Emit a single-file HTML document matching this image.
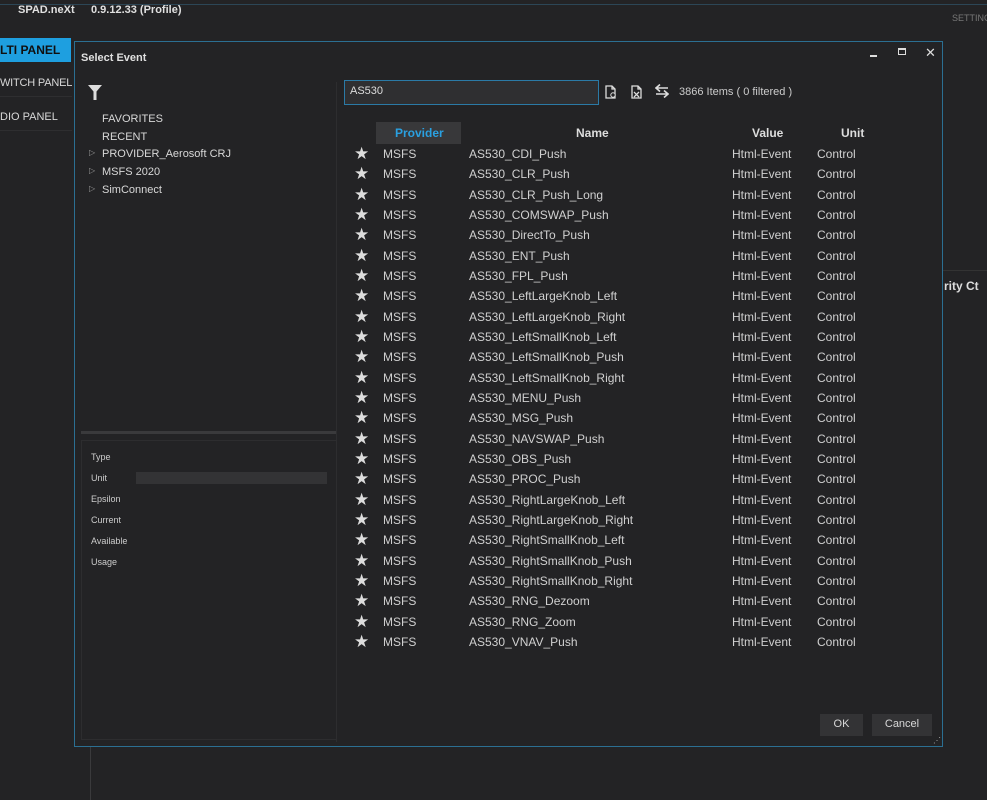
<!DOCTYPE html>
<html><head><meta charset="utf-8"><style>
*{margin:0;padding:0;box-sizing:border-box}
body{width:987px;height:800px;background:#232325;font-family:"Liberation Sans",sans-serif;color:#d8d8d8;position:relative;overflow:hidden;font-size:12px}
.a{position:absolute;white-space:nowrap}
.row{position:absolute;left:0;height:20px;font-size:12px;color:#d0d0d0}
.row span{position:absolute;top:0}
</style></head><body>
<div class="a" style="left:0;top:4px;width:987px;height:1px;background:#2c4656"></div>
<div class="a" style="left:18px;top:4px;font-size:11px;font-weight:bold;color:#e0e0e0">SPAD.neXt</div>
<div class="a" style="left:91px;top:4px;font-size:11px;font-weight:bold;color:#e0e0e0">0.9.12.33 (Profile)</div>
<div class="a" style="left:952px;top:13px;font-size:9px;color:#777">SETTING</div>
<div class="a" style="left:0;top:38px;width:71px;height:24px;background:#1e9fe0;color:#101010;font-size:12px;font-weight:bold;padding:5px 0 0 0">LTI PANEL</div>
<div class="a" style="left:0;top:77px;font-size:11px;color:#d8d8d8;letter-spacing:-0.2px">WITCH PANEL</div>
<div class="a" style="left:0;top:96px;width:72px;height:1px;background:#2e2e30"></div>
<div class="a" style="left:0;top:111px;font-size:11px;color:#d8d8d8">DIO PANEL</div>
<div class="a" style="left:0;top:130px;width:72px;height:1px;background:#2e2e30"></div>
<div class="a" style="left:90px;top:746px;width:1px;height:54px;background:#3a3a3c"></div>
<div class="a" style="left:942px;top:270px;width:45px;height:1px;background:#333"></div>
<div class="a" style="left:944px;top:279px;font-size:12px;font-weight:bold;color:#ddd">rity Ct</div>

<div class="a" style="left:74px;top:41px;width:869px;height:706px;border:1px solid #2b6f92;background:#232325">
 <div class="a" style="left:6px;top:10px;font-size:11px;font-weight:bold;color:#e0e0e0">Select Event</div>
 <div class="a" style="left:795px;top:13px;width:7px;height:2px;background:#ddd"></div>
 <div class="a" style="left:823px;top:6px;width:8px;height:7px;border:1px solid #ddd;border-top-width:2px"></div>
 <div class="a" style="left:850px;top:3px;font-size:13px;color:#ddd">✕</div>
 <svg class="a" style="left:13px;top:43px" width="14" height="15" viewBox="0 0 14 15"><path d="M0 0H14L8.5 6.5V15H5.5V6.5Z" fill="#ddd"/></svg>
 <div class="a" style="left:27px;top:71px;font-size:11px">FAVORITES</div>
 <div class="a" style="left:27px;top:89px;font-size:11px">RECENT</div>
 <div class="a" style="left:14px;top:106px;font-size:8px;color:#999">▷</div><div class="a" style="left:27px;top:106px;font-size:11px">PROVIDER_Aerosoft CRJ</div>
 <div class="a" style="left:14px;top:124px;font-size:8px;color:#999">▷</div><div class="a" style="left:27px;top:124px;font-size:11px">MSFS 2020</div>
 <div class="a" style="left:14px;top:142px;font-size:8px;color:#999">▷</div><div class="a" style="left:27px;top:142px;font-size:11px">SimConnect</div>
 <div class="a" style="left:6px;top:389px;width:256px;height:3px;background:#3a3a3c"></div>
 <div class="a" style="left:261px;top:40px;width:1px;height:660px;background:#2d2d2f"></div>
 <div class="a" style="left:6px;top:398px;width:256px;height:300px;border:1px solid #2d2d2f"></div>
 <div class="a" style="left:16px;top:410px;font-size:9px;color:#ccc">Type</div>
 <div class="a" style="left:16px;top:431px;font-size:9px;color:#ccc">Unit</div>
 <div class="a" style="left:61px;top:430px;width:191px;height:12px;background:#333335"></div>
 <div class="a" style="left:16px;top:452px;font-size:9px;color:#ccc">Epsilon</div>
 <div class="a" style="left:16px;top:473px;font-size:9px;color:#ccc">Current</div>
 <div class="a" style="left:16px;top:494px;font-size:9px;color:#ccc">Available</div>
 <div class="a" style="left:16px;top:515px;font-size:9px;color:#ccc">Usage</div>

 <div class="a" style="left:269px;top:38px;width:255px;height:25px;border:1px solid #2b7aa6;background:#2f2f31;padding:4px 5px;font-size:11px;color:#ddd">AS530</div>
 <svg class="a" style="left:530px;top:43px" width="12" height="14" viewBox="0 0 12 14"><path d="M1 1H7L10 4V13H1Z M7 1V4H10" fill="none" stroke="#ddd" stroke-width="1.3"/><circle cx="8" cy="10" r="2.2" fill="#232325" stroke="#ddd"/></svg>
 <svg class="a" style="left:556px;top:43px" width="12" height="14" viewBox="0 0 12 14"><path d="M1 1H7L10 4V13H1Z M7 1V4H10 M3 7L8 12 M8 7L3 12" fill="none" stroke="#ddd" stroke-width="1.3"/></svg>
 <svg class="a" style="left:580px;top:42px" width="14" height="14" viewBox="0 0 14 14"><path d="M1 4H13 M5 0.5L1 4L5 7.5 M13 10H1 M9 6.5L13 10L9 13.5" fill="none" stroke="#ddd" stroke-width="1.6"/></svg>
 <div class="a" style="left:604px;top:44px;font-size:11px;color:#ccc">3866 Items ( 0 filtered )</div>

 <div class="a" style="left:301px;top:80px;width:85px;height:22px;background:#38383a"></div>
 <div class="a" style="left:320px;top:84px;font-size:12px;font-weight:bold;color:#2aa0e0">Provider</div>
 <div class="a" style="left:501px;top:84px;font-size:12px;font-weight:bold;color:#ddd">Name</div>
 <div class="a" style="left:677px;top:84px;font-size:12px;font-weight:bold;color:#ddd">Value</div>
 <div class="a" style="left:766px;top:84px;font-size:12px;font-weight:bold;color:#ddd">Unit</div>
 <div id="rows"></div>

 <div class="a" style="left:745px;top:672px;width:43px;height:22px;background:#333335;font-size:11px;text-align:center;padding-top:4px">OK</div>
 <div class="a" style="left:797px;top:672px;width:60px;height:22px;background:#333335;font-size:11px;text-align:center;padding-top:4px">Cancel</div>
 <div class="a" style="left:858px;top:694px;font-size:8px;color:#aaa">⋰</div>
</div>
<script>
var n=["CDI_Push","CLR_Push","CLR_Push_Long","COMSWAP_Push","DirectTo_Push","ENT_Push","FPL_Push","LeftLargeKnob_Left","LeftLargeKnob_Right","LeftSmallKnob_Left","LeftSmallKnob_Push","LeftSmallKnob_Right","MENU_Push","MSG_Push","NAVSWAP_Push","OBS_Push","PROC_Push","RightLargeKnob_Left","RightLargeKnob_Right","RightSmallKnob_Left","RightSmallKnob_Push","RightSmallKnob_Right","RNG_Dezoom","RNG_Zoom","VNAV_Push"];
var h="";n.forEach(function(x,i){var t=105+i*20.33;h+='<div class="row" style="top:'+t+'px;width:860px"><span style="left:279px;top:-3px;font-size:17px;color:#ddd">★</span><span style="left:308px">MSFS</span><span style="left:394px">AS530_'+x+'</span><span style="left:657px">Html-Event</span><span style="left:742px">Control</span></div>';});
document.getElementById("rows").innerHTML=h;
</script>
</body></html>
